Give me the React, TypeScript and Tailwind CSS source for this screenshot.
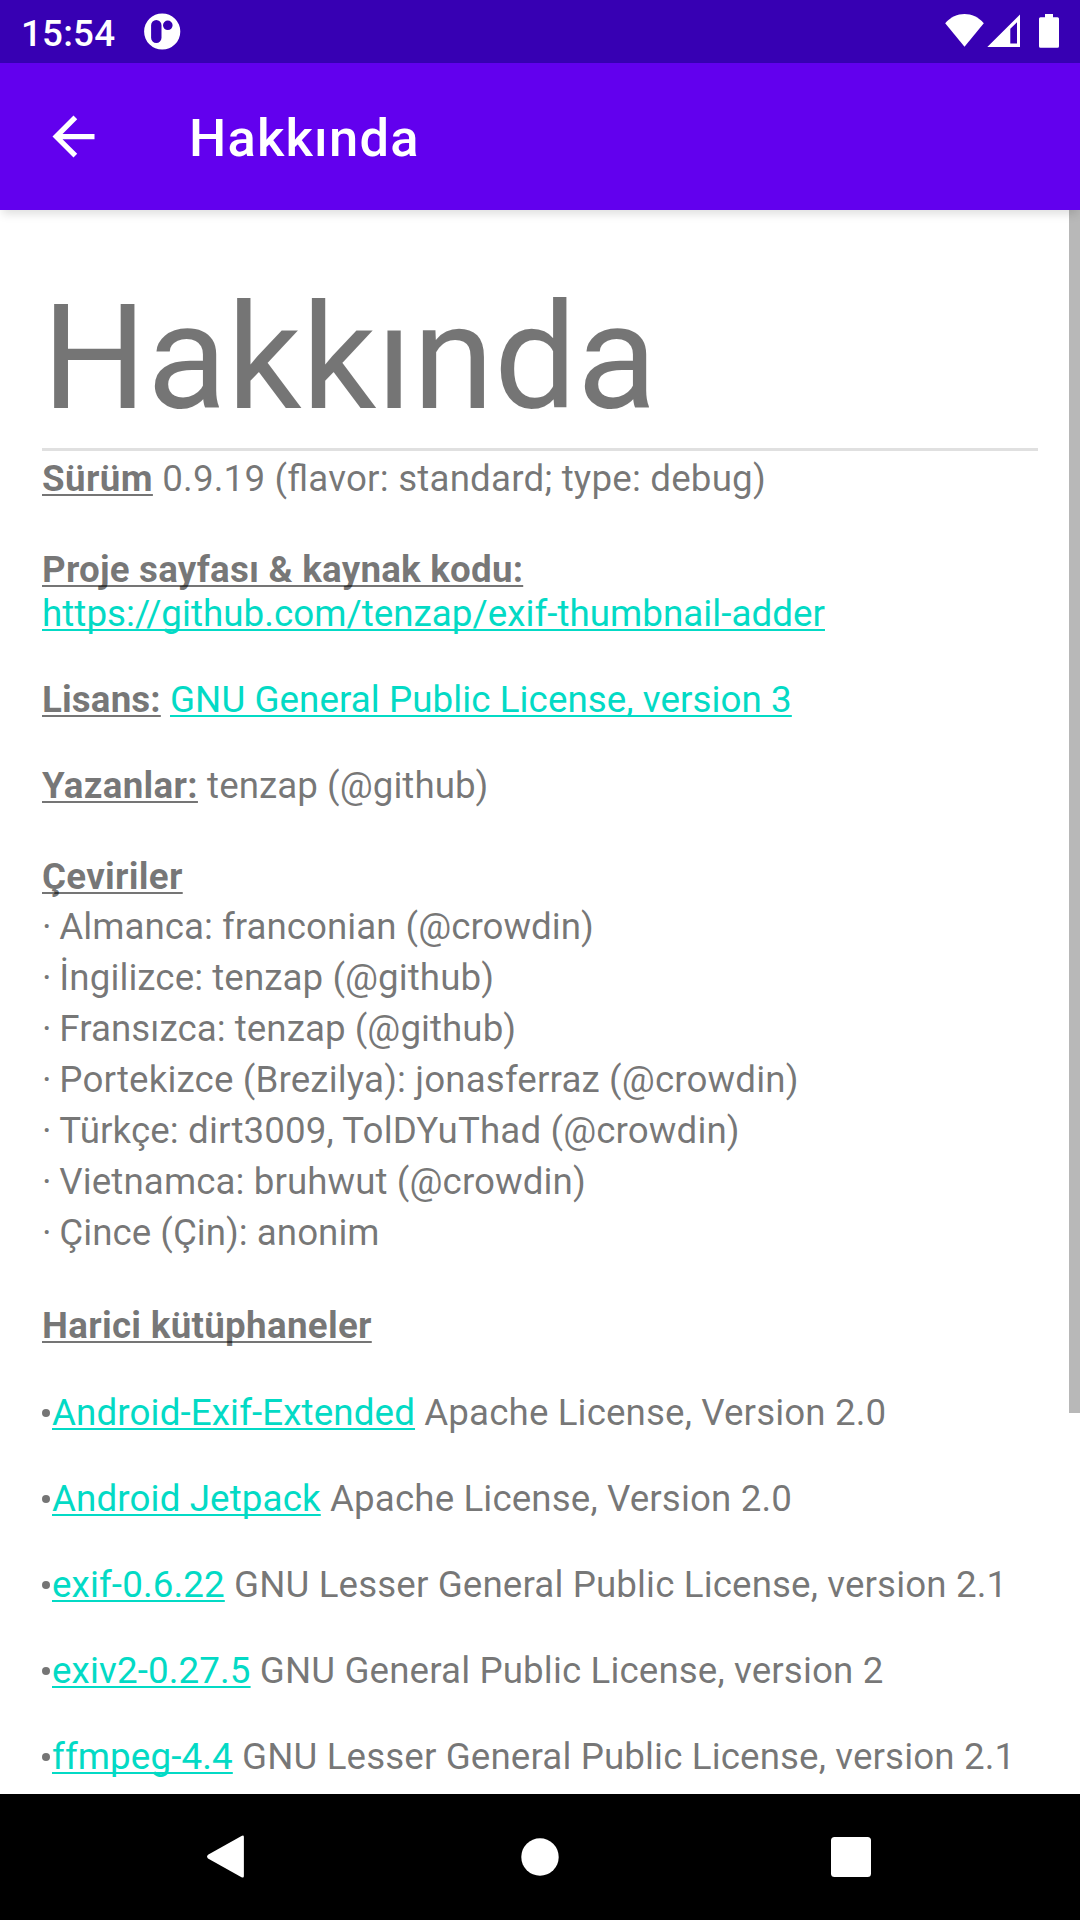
import React from "react";

const TRANSLATORS = [
  { text: "Almanca: franconian (@crowdin)", tracking: "tracking-normal" },
  { text: "İngilizce: tenzap (@github)", tracking: "tracking-[0.05px]" },
  { text: "Fransızca: tenzap (@github)", tracking: "tracking-[0.03px]" },
  { text: "Portekizce (Brezilya): jonasferraz (@crowdin)", tracking: "tracking-[0.12px]" },
  { text: "Türkçe: dirt3009, TolDYuThad (@crowdin)", tracking: "tracking-[0.1px]" },
  { text: "Vietnamca: bruhwut (@crowdin)", tracking: "tracking-[0.07px]" },
  { text: "Çince (Çin): anonim", tracking: "tracking-normal" },
];

const LIBRARIES = [
  { name: "Android-Exif-Extended", license: "Apache License, Version 2.0" },
  { name: "Android Jetpack", license: "Apache License, Version 2.0" },
  { name: "exif-0.6.22", license: "GNU Lesser General Public License, version 2.1" },
  { name: "exiv2-0.27.5", license: "GNU General Public License, version 2" },
  { name: "ffmpeg-4.4", license: "GNU Lesser General Public License, version 2.1" },
];

const UNDERLINE = "underline decoration-2 underline-offset-[3px] [text-decoration-skip-ink:none]";

function Label({ children, tracking = "tracking-[0.28px]" }: { children: React.ReactNode; tracking?: string }) {
  return <b className={`${UNDERLINE} font-bold ${tracking}`}>{children}</b>;
}

function Link({ children }: { children: React.ReactNode }) {
  return (
    <a href="#" className={`${UNDERLINE} text-[#03dac5]`}>
      {children}
    </a>
  );
}

function StatusBar() {
  return (
    <div className="flex h-[63px] items-start justify-between bg-[#3700b3] text-white">
      <div className="flex items-start">
        <span className="mt-3 ml-[21px] text-[36.75px] leading-[43px] font-medium tracking-[0.2px]">15:54</span>
        <svg className="mt-[13px] ml-[29px] h-[37px] w-[37px]" viewBox="0 0 37 37">
          <path
            fill="currentColor"
            fillRule="evenodd"
            d="M18.2 .4a18.1 18.1 0 1 0 0 36.2a18.1 18.1 0 1 0 0-36.2zM12.3 7a5.2 5.2 0 0 1 5.2 5.2v12.6a5.2 5.2 0 0 1-10.4 0V12.2A5.2 5.2 0 0 1 12.3 7zM23.8 7.5a4.8 4.8 0 1 1 0 9.6a4.8 4.8 0 1 1 0-9.6z"
          />
        </svg>
      </div>
      <svg className="mt-[13px] mr-[21px] h-9 w-[115px]" viewBox="0 0 115 36" fill="currentColor">
        <path d="M1.2 10.3C6.5 4 13.5 1 20.5 1S34.5 4 39.8 10.3L20.5 33.8z" />
        <path fillRule="evenodd" d="M43.3 34L76 1.5V34zM66.3 15.8V30.5H73V9.2z" />
        <path d="M101 1h8v3.3h4.500a1.5 1.5 0 0 1 1.5 1.5v27.500a1.5 1.5 0 0 1-1.5 1.5h-17a1.5 1.5 0 0 1-1.5-1.5V5.8a1.5 1.5 0 0 1 1.5-1.5H101z" />
      </svg>
    </div>
  );
}

function AppBar() {
  return (
    <header className="relative z-10 flex h-[147px] items-center bg-[#6200ee] text-white shadow-[0_6px_9px_-2px_rgba(0,0,0,0.13)]">
      <svg className="ml-[42px] h-[63px] w-[63px]" viewBox="0 0 24 24" fill="currentColor">
        <path d="M20 11H7.83l5.59-5.59L12 4l-8 8 8 8 1.41-1.41L7.83 13H20v-2z" />
      </svg>
      <h2 className="mt-[3px] ml-[84px] text-[52.5px] leading-[62px] font-medium tracking-[1.2px]">Hakkında</h2>
    </header>
  );
}

function NavBar() {
  return (
    <nav className="flex h-[126px] items-center justify-center bg-black text-white">
      <svg className="h-[44px] w-[666px]" viewBox="0 0 666 44" fill="currentColor">
        <path d="M34.500 .9Q36.900-.2 36.900 2V41Q36.900 43.300 34.500 42.200L1 23.500Q-.9 21.600 1 19.700z" />
        <circle cx="333" cy="22" r="18.7" />
        <rect x="624" y="2" width="40" height="40" rx="3.5" />
      </svg>
    </nav>
  );
}

export default function App() {
  return (
    <div className="flex h-[1920px] w-[1080px] flex-col overflow-hidden bg-white font-[Roboto,sans-serif]">
      <StatusBar />
      <AppBar />
      <main className="relative h-[1584px] overflow-hidden px-[42px] pt-[62px] text-[36.75px] leading-[43px] tracking-[0.03px] whitespace-nowrap text-black/54">
        <h1 className="text-[147px] leading-[172px] tracking-[0.1px]">Hakkında</h1>
        <hr className="mt-1 h-[3px] border-0 bg-[#e0e0e0]" />
        <p className="mt-1.5 tracking-[0.18px] [font-feature-settings:'liga'_1]">
          <Label tracking="tracking-[0.36px]">Sürüm</Label> 0.9.19 (flavor: standard; type: debug)
        </p>
        <p className="mt-12">
          <Label tracking="tracking-[0.2px]">Proje sayfası &amp; kaynak kodu:</Label>
        </p>
        <p className="mt-px">
          <Link>https://github.com/tenzap/exif-thumbnail-adder</Link>
        </p>
        <p className="mt-[43px] tracking-[0.06px]">
          <Label tracking="tracking-[0.12px]">Lisans:</Label> <Link>GNU General Public License, version 3</Link>
        </p>
        <p className="mt-[43px]">
          <Label>Yazanlar:</Label> tenzap (@github)
        </p>
        <p className="mt-12">
          <Label>Çeviriler</Label>
        </p>
        <ul className="mt-[7px] flex flex-col gap-2">
          {TRANSLATORS.map(({ text, tracking }) => (
            <li key={text} className={tracking}>
              <span className="tracking-[-0.7px]">· </span>
              {text}
            </li>
          ))}
        </ul>
        <p className="mt-[50px]">
          <Label>Harici kütüphaneler</Label>
        </p>
        <ul className="mt-11 flex flex-col gap-[43px] tracking-[0.11px]">
          {LIBRARIES.map(({ name, license }) => (
            <li key={name} className="flex items-center">
              <span className="mr-0.5 h-2 w-2 shrink-0 rounded-full bg-black/54" />
              <span>
                <Link>{name}</Link> {license}
              </span>
            </li>
          ))}
        </ul>
        <div className="absolute top-0 right-0 h-[1203px] w-[11px] bg-[#b8b8b8]" />
      </main>
      <NavBar />
    </div>
  );
}
